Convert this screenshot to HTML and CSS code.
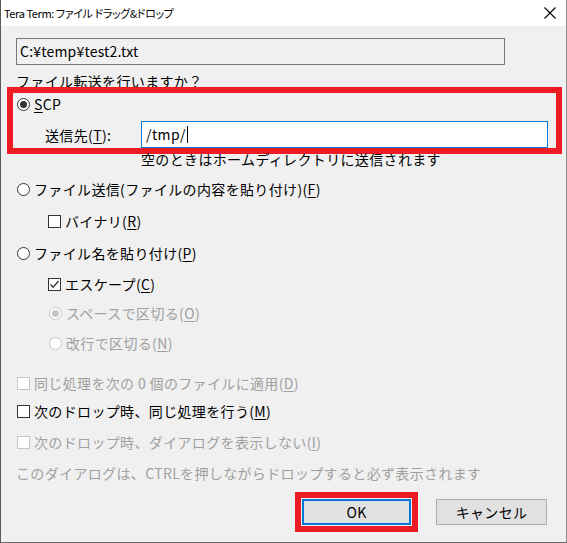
FILE: index.html
```html
<!DOCTYPE html>
<html lang="ja">
<head>
<meta charset="utf-8">
<link rel="stylesheet" href="styles.css">
</head>
<body>
<div class="win">
  <div class="titlebar">
    <span class="title">Tera Term: ファイル ドラッグ&amp;ドロップ</span>
    <svg class="close" width="12" height="12" viewBox="0 0 12 12"><path d="M0.5 0.5 L11.5 11.5 M11.5 0.5 L0.5 11.5" stroke="#000" stroke-width="1.1" fill="none"/></svg>
  </div>
  <div class="body">
    <div class="path">C:¥temp¥test2.txt</div>
    <div class="question">ファイル転送を行いますか？</div>
    <div class="scp-group">
      <div class="row r-scp"><span class="radio on"></span><span class="lbl"><u>S</u>CP</span></div>
      <div class="dest">
        <span class="dest-lbl">送信先(<u>T</u>):</span>
        <div class="input">/tmp/<span class="caret"></span></div>
      </div>
    </div>
    <div class="hint">空のときはホームディレクトリに送信されます</div>
    <div class="row r-file"><span class="radio"></span><span class="lbl">ファイル送信(ファイルの内容を貼り付け)(<u>F</u>)</span></div>
    <div class="row r-bin sub"><span class="check"></span><span class="lbl">バイナリ(<u>R</u>)</span></div>
    <div class="row r-name"><span class="radio"></span><span class="lbl">ファイル名を貼り付け(<u>P</u>)</span></div>
    <div class="row r-esc sub"><span class="check on"><svg width="11" height="11" viewBox="0 0 11 11"><path d="M1.5 5.5 L4.2 8.2 L9.5 2" stroke="#333" stroke-width="1.3" fill="none"/></svg></span><span class="lbl">エスケープ(<u>C</u>)</span></div>
    <div class="row r-space sub dis"><span class="radio on"></span><span class="lbl">スペースで区切る(<u>O</u>)</span></div>
    <div class="row r-nl sub dis"><span class="radio"></span><span class="lbl">改行で区切る(<u>N</u>)</span></div>
    <div class="row r-same dis"><span class="check"></span><span class="lbl">同じ処理を次の 0 個のファイルに適用(<u>D</u>)</span></div>
    <div class="row r-next"><span class="check"></span><span class="lbl">次のドロップ時、同じ処理を行う(<u>M</u>)</span></div>
    <div class="row r-nodlg dis"><span class="check"></span><span class="lbl">次のドロップ時、ダイアログを表示しない(<u>I</u>)</span></div>
    <div class="note">このダイアログは、CTRLを押しながらドロップすると必ず表示されます</div>
    <div class="buttons">
      <button class="btn ok">OK</button>
      <button class="btn cancel">キャンセル</button>
    </div>
  </div>
</div>
</body>
</html>
```
FILE: styles.css
```css
html, body {
  margin: 0;
  padding: 0;
  background: #f0f0f0;
}
body {
  font-family: "Noto Sans CJK JP", "Noto Sans", sans-serif;
  font-size: 14px;
  letter-spacing: 0.35px;
  color: #000;
}
.win {
  width: 567px;
  height: 543px;
  box-sizing: border-box;
  border-left: 1px solid #5a5a5a;
  border-right: 1px solid #8a8a8a;
  border-bottom: 1px solid #6a6a6a;
  background: #f0f0f0;
  display: flex;
  flex-direction: column;
}
.titlebar {
  height: 26px;
  background: #fff;
  display: flex;
  align-items: center;
  justify-content: space-between;
  padding: 0 10px 0 3px;
  flex: none;
}
.title {
  font-size: 11px;
  letter-spacing: -0.4px;
  font-feature-settings: "palt";
  color: #000;
}
.close {
  display: block;
}
.body {
  display: flex;
  flex-direction: column;
  padding-left: 15px;
}
.path {
  margin-top: 12px;
  width: 489px;
  height: 27px;
  box-sizing: border-box;
  border: 1px solid #7a7a7a;
  background: #f0f0f0;
  padding-left: 3px;
  line-height: 25px;
  font-size: 14px;
  letter-spacing: 0.2px;
}
.question {
  margin-top: 6px;
  height: 20px;
  line-height: 20px;
}
.scp-group {
  margin-top: 2px;
  margin-left: -3px;
  width: 540px;
  padding: 1px 0 0 3px;
  outline: 6px solid #ed1c24;
  outline-offset: 0;
}
.row {
  display: flex;
  align-items: center;
  height: 20px;
  line-height: 20px;
}
.sub {
  padding-left: 32px;
}
.lbl {
  margin-left: 4px;
}
u {
  text-decoration: underline;
  text-underline-offset: 2px;
}
.radio {
  width: 13px;
  height: 13px;
  box-sizing: border-box;
  border: 1px solid #333;
  border-radius: 50%;
  background: #fff;
  margin-left: 1px;
  display: flex;
  align-items: center;
  justify-content: center;
  flex: none;
}
.radio.on::after {
  content: "";
  width: 7px;
  height: 7px;
  border-radius: 50%;
  background: #333;
}
.check {
  width: 13px;
  height: 13px;
  box-sizing: border-box;
  border: 1px solid #333;
  background: #fff;
  display: flex;
  align-items: center;
  justify-content: center;
  flex: none;
}
.check svg {
  display: block;
}
.dis {
  color: #a0a0a0;
}
.dis .radio, .dis .check {
  border-color: #c6c6c6;
}
.dis .radio.on::after {
  background: #c6c6c6;
}
.dest {
  display: flex;
  align-items: center;
  margin-top: 7px;
}
.dest-lbl {
  width: 96px;
  padding-left: 29px;
}
.input {
  width: 407px;
  height: 27px;
  box-sizing: border-box;
  border: 1px solid #0078d7;
  background: #fff;
  padding-left: 4px;
  line-height: 25px;
  font-family: "Noto Sans CJK JP", sans-serif;
  font-size: 14px;
  display: flex;
  align-items: center;
}
.caret {
  display: inline-block;
  width: 1px;
  height: 17px;
  background: #000;
  margin-left: 1px;
}
.hint {
  margin-top: 1px;
  padding-left: 125px;
  height: 20px;
  line-height: 20px;
}
.r-file { margin-top: 10px; }
.r-bin { margin-top: 12px; }
.r-name { margin-top: 12px; }
.r-esc { margin-top: 11px; }
.r-space { margin-top: 9px; }
.r-nl { margin-top: 10px; }
.r-same { margin-top: 20px; }
.r-next { margin-top: 8px; }
.r-nodlg { margin-top: 11px; }
.r-same .check, .r-next .check, .r-nodlg .check { margin-left: 1px; }
.note {
  margin-top: 11px;
  height: 20px;
  line-height: 20px;
  color: #a0a0a0;
}
.buttons {
  display: flex;
  margin-top: 16px;
  padding-left: 286px;
  gap: 25px;
}
.btn {
  height: 26px;
  box-sizing: border-box;
  background: #e1e1e1;
  font-family: "Noto Sans CJK JP", sans-serif;
  font-size: 14px;
  letter-spacing: 0.35px;
  color: #000;
  padding: 0;
  margin: 0;
}
.ok {
  width: 109px;
  border: 2px solid #0078d7;
  outline: 6px solid #ed1c24;
  outline-offset: 1px;
}
.cancel {
  width: 111px;
  border: 1px solid #adadad;
}
```
